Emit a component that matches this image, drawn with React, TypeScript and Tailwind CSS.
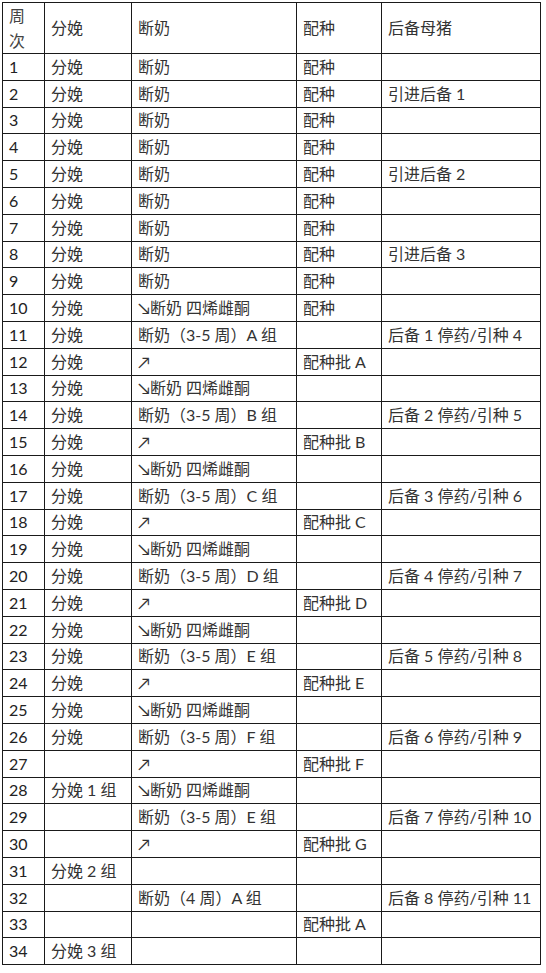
import React from 'react';

type Row = [string, string, string, string, string];

const rows: Row[] = [
  ['1', '分娩', '断奶', '配种', ''],
  ['2', '分娩', '断奶', '配种', '引进后备 1'],
  ['3', '分娩', '断奶', '配种', ''],
  ['4', '分娩', '断奶', '配种', ''],
  ['5', '分娩', '断奶', '配种', '引进后备 2'],
  ['6', '分娩', '断奶', '配种', ''],
  ['7', '分娩', '断奶', '配种', ''],
  ['8', '分娩', '断奶', '配种', '引进后备 3'],
  ['9', '分娩', '断奶', '配种', ''],
  ['10', '分娩', '↘断奶 四烯雌酮', '配种', ''],
  ['11', '分娩', '断奶（3-5 周）A 组', '', '后备 1 停药/引种 4'],
  ['12', '分娩', '↗', '配种批 A', ''],
  ['13', '分娩', '↘断奶 四烯雌酮', '', ''],
  ['14', '分娩', '断奶（3-5 周）B 组', '', '后备 2 停药/引种 5'],
  ['15', '分娩', '↗', '配种批 B', ''],
  ['16', '分娩', '↘断奶 四烯雌酮', '', ''],
  ['17', '分娩', '断奶（3-5 周）C 组', '', '后备 3 停药/引种 6'],
  ['18', '分娩', '↗', '配种批 C', ''],
  ['19', '分娩', '↘断奶 四烯雌酮', '', ''],
  ['20', '分娩', '断奶（3-5 周）D 组', '', '后备 4 停药/引种 7'],
  ['21', '分娩', '↗', '配种批 D', ''],
  ['22', '分娩', '↘断奶 四烯雌酮', '', ''],
  ['23', '分娩', '断奶（3-5 周）E 组', '', '后备 5 停药/引种 8'],
  ['24', '分娩', '↗', '配种批 E', ''],
  ['25', '分娩', '↘断奶 四烯雌酮', '', ''],
  ['26', '分娩', '断奶（3-5 周）F 组', '', '后备 6 停药/引种 9'],
  ['27', '', '↗', '配种批 F', ''],
  ['28', '分娩 1 组', '↘断奶 四烯雌酮', '', ''],
  ['29', '', '断奶（3-5 周）E 组', '', '后备 7 停药/引种 10'],
  ['30', '', '↗', '配种批 G', ''],
  ['31', '分娩 2 组', '', '', ''],
  ['32', '', '断奶（4 周）A 组', '', '后备 8 停药/引种 11'],
  ['33', '', '', '配种批 A', ''],
  ['34', '分娩 3 组', '', '', ''],
];

const cell = 'border border-[#1a1a1a] px-[6px] align-middle whitespace-nowrap overflow-hidden';

export default function App() {
  return (
    <div
      className="min-h-[973px] w-[546px] bg-white pl-[2px] pt-[2px] text-[16px] text-[#333]"
      style={{ fontFamily: 'Lato, "Noto Sans CJK SC", sans-serif' }}
    >
      <table className="table-fixed border-collapse w-[538px]">
        <colgroup>
          <col className="w-[42px]" />
          <col className="w-[87px]" />
          <col className="w-[165px]" />
          <col className="w-[85px]" />
          <col className="w-[159px]" />
        </colgroup>
        <thead>
          <tr className="h-[51px]">
            <th className={`${cell} px-[5px] font-normal text-left leading-[25px] text-[#444]`}>
              周<br />次
            </th>
            <th className={`${cell} font-normal text-left`}>分娩</th>
            <th className={`${cell} font-normal text-left`}>断奶</th>
            <th className={`${cell} font-normal text-left`}>配种</th>
            <th className={`${cell} font-normal text-left`}>后备母猪</th>
          </tr>
        </thead>
        <tbody>
          {rows.map((r) => (
            <tr key={r[0]} className="h-[26.8px]">
              <td className={`${cell} px-[5px] text-[#222]`}>{r[0]}</td>
              <td className={cell}>{r[1]}</td>
              <td className={cell}>{r[2]}</td>
              <td className={cell}>{r[3]}</td>
              <td className={cell}>{r[4]}</td>
            </tr>
          ))}
        </tbody>
      </table>
    </div>
  );
}
